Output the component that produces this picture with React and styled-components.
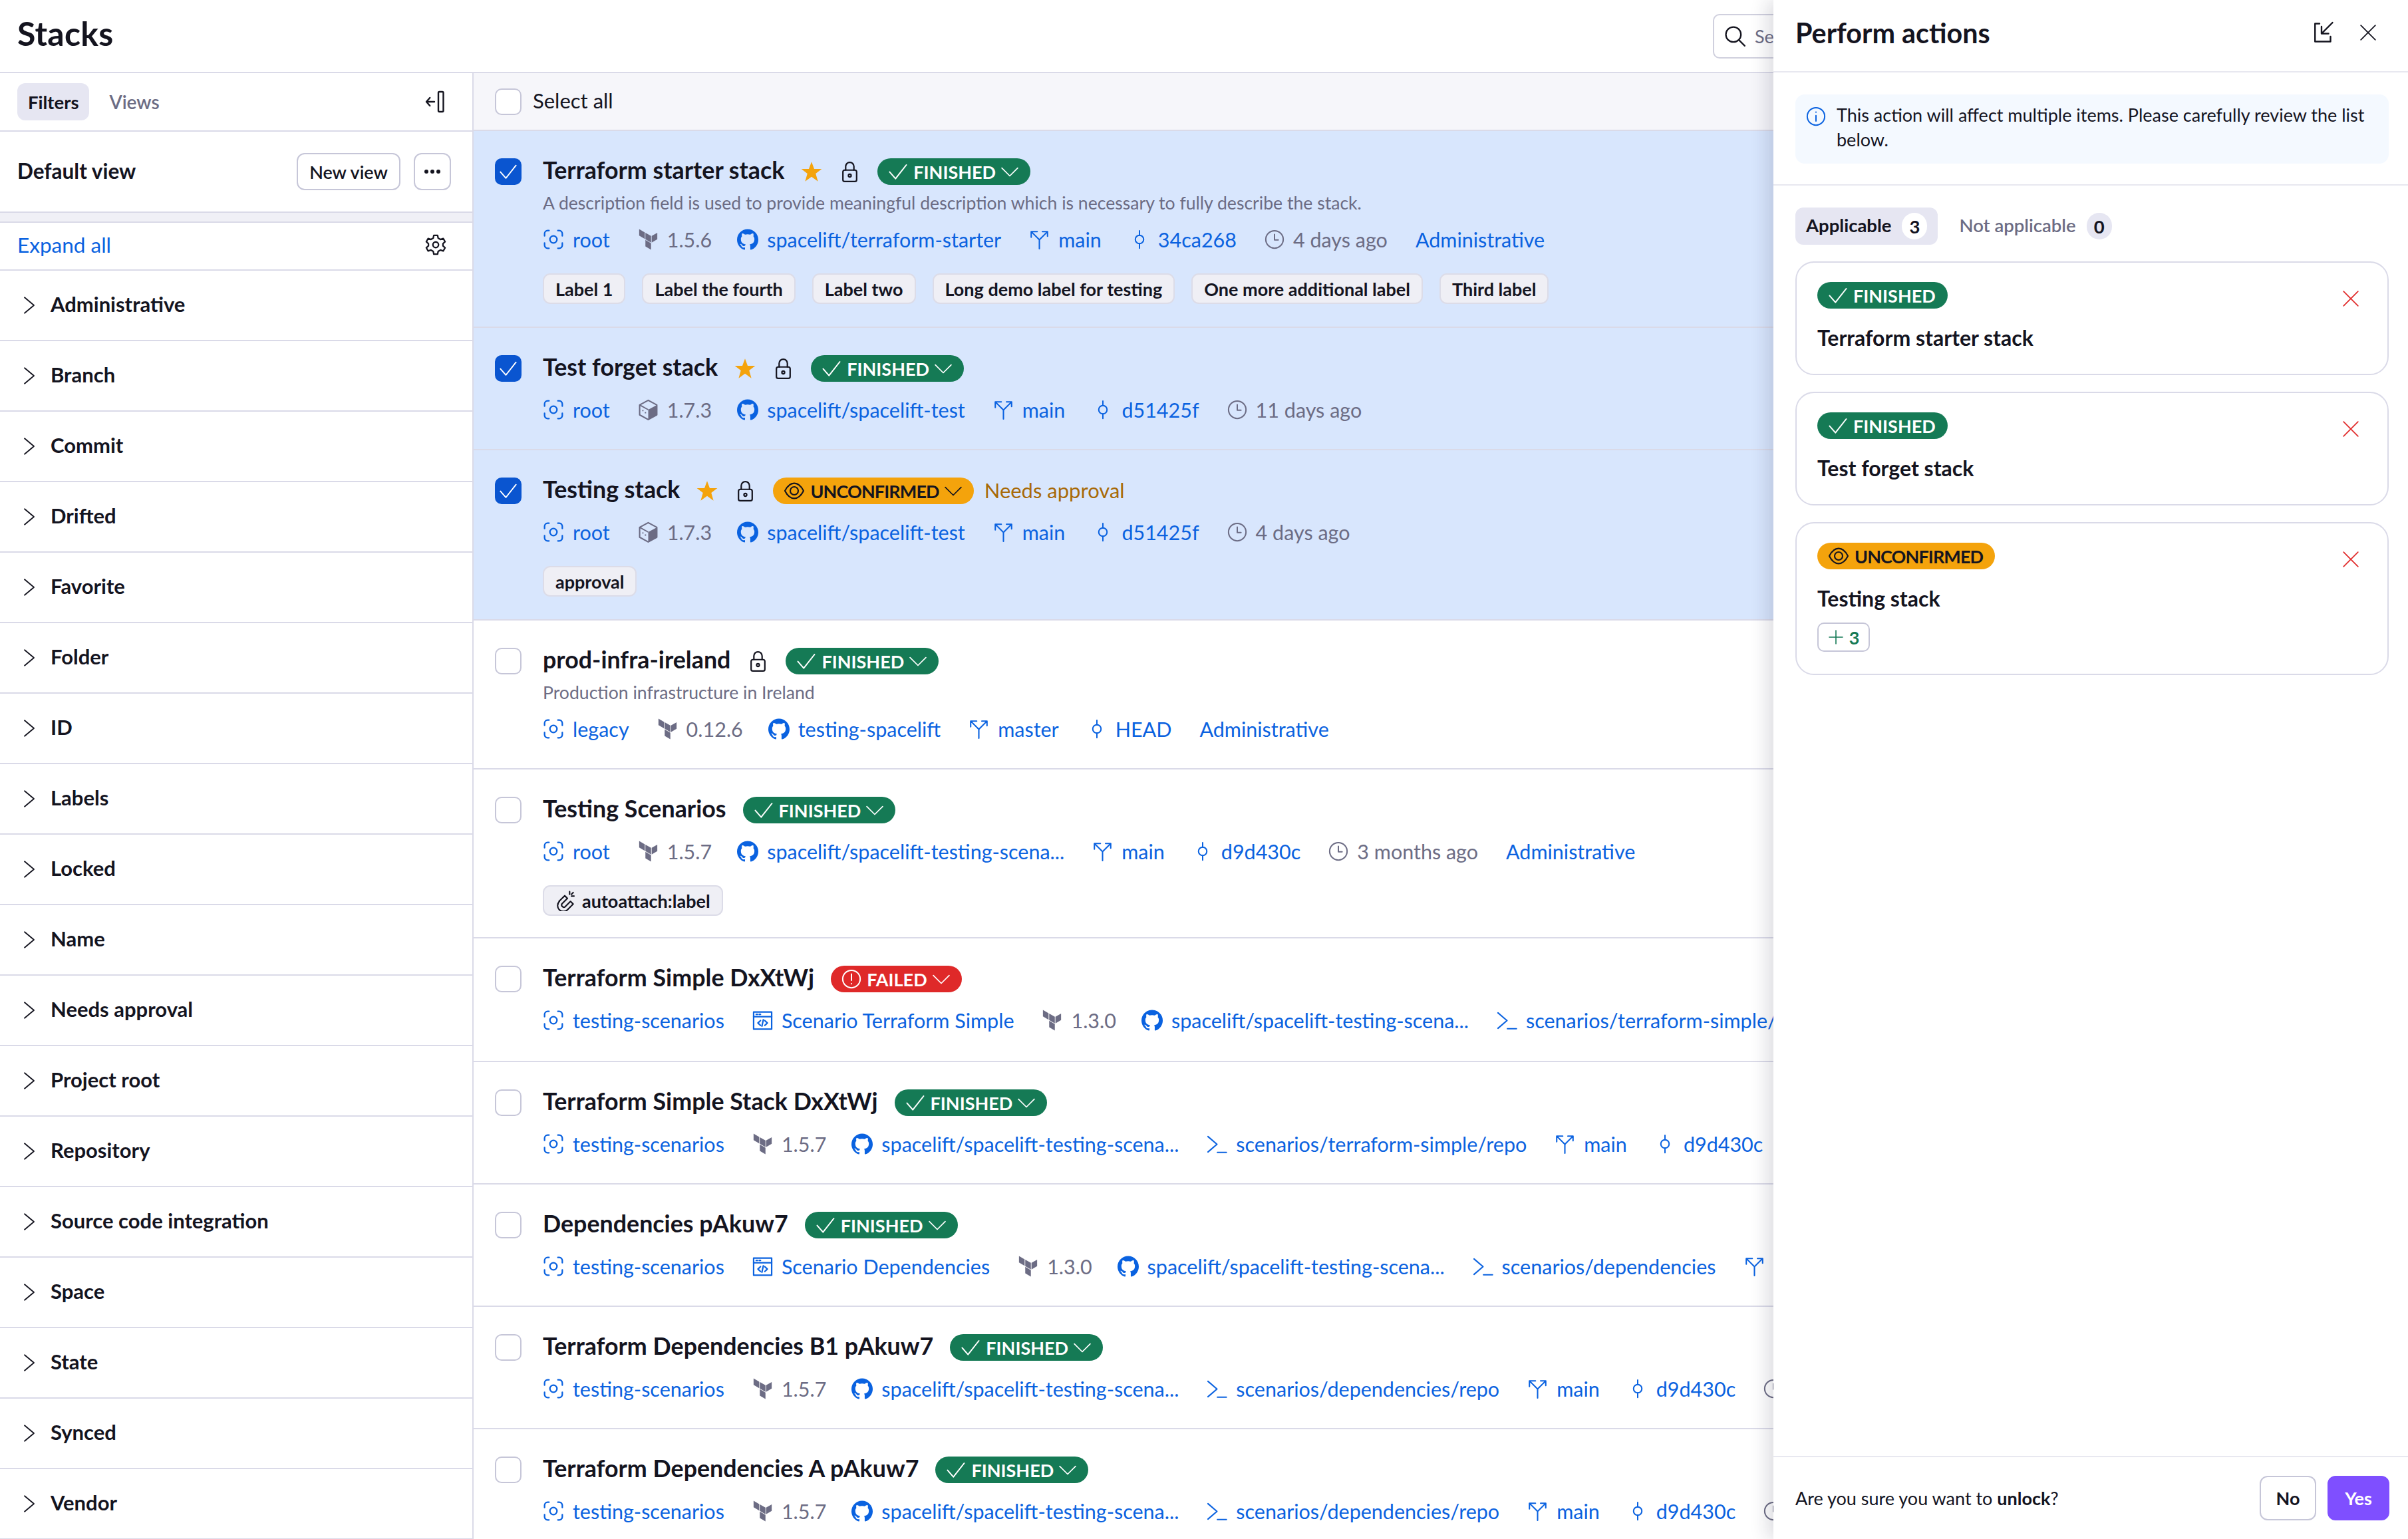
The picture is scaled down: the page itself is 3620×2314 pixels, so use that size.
import React from 'react'
import styled, { createGlobalStyle } from 'styled-components'
import { SiGithub } from 'react-icons/si'

const Global = createGlobalStyle`
  html, body { margin: 0; padding: 0; background: #fff; }
  body { font-family: "Lato", "Noto Sans", sans-serif; color: #14141f; overflow: hidden; }
  * { box-sizing: border-box; }
`

const BLUE = '#0a62e0'
const GRAY = '#6c6c84'
const LINE = '#dadae8'

const Page = styled.div`
  position: relative;
  width: 3620px;
  height: 2314px;
  overflow: hidden;
  background: #fff;
`
const Header = styled.div`
  height: 110px;
  border-bottom: 2px solid ${LINE};
  display: flex;
  align-items: center;
  justify-content: space-between;
  padding: 0 0 0 26px;
`
const Title = styled.h1`
  margin: 0 0 8px;
  font-size: 50px;
  font-weight: 700;
  letter-spacing: 0.2px;
`
const SearchBox = styled.div`
  width: 400px;
  height: 67px;
  margin: 0 645px 0 0;
  border: 2px solid #d0d0de;
  border-radius: 10px;
  display: flex;
  align-items: center;
  gap: 13px;
  padding: 0 14px;
  font-size: 27px;
  color: ${GRAY};
  flex-shrink: 0;
`
const Body = styled.div`
  display: flex;
  height: 2204px;
`
const Sidebar = styled.aside`
  width: 712px;
  flex-shrink: 0;
  border-right: 2px solid ${LINE};
`
const TabsRow = styled.div`
  height: 88px;
  border-bottom: 2px solid ${LINE};
  display: flex;
  align-items: center;
  padding: 0 36px 0 26px;
  gap: 14px;
`
const SideTab = styled.div`
  height: 56px;
  padding: 0 16px;
  border-radius: 12px;
  display: flex;
  align-items: center;
  font-size: ${p => (p.$active ? '27.5px' : '28px')};
  font-weight: ${p => (p.$active ? 700 : 600)};
  color: ${p => (p.$active ? '#14141f' : GRAY)};
  background: ${p => (p.$active ? '#e6e6f2' : 'transparent')};
`
const Spacer = styled.div`
  flex: 1;
`
const ViewRow = styled.div`
  height: 120px;
  display: flex;
  align-items: center;
  padding: 0 32px 0 26px;
  gap: 20px;
  font-size: 31.5px;
  font-weight: 700;
`
const ViewName = styled.span`
  margin-bottom: 3px;
`
const OutlineBtn = styled.button`
  height: 56px;
  padding: 0 ${p => (p.$square ? '0' : '17px')};
  width: ${p => (p.$square ? '56px' : 'auto')};
  background: #fff;
  border: 2px solid #c6c6d8;
  border-radius: 12px;
  font: 600 27px "Lato", sans-serif;
  color: #14141f;
  display: flex;
  align-items: center;
  justify-content: center;
`
const GrayBand = styled.div`
  height: 17px;
  background: #f0f0f6;
  border-top: 2px solid ${LINE};
  border-bottom: 2px solid ${LINE};
`
const ExpandRow = styled.div`
  height: 72px;
  border-bottom: 2px solid ${LINE};
  display: flex;
  align-items: center;
  justify-content: space-between;
  padding: 0 38px 4px 26px;
  font-size: 31.5px;
  color: ${BLUE};
`
const FilterRow = styled.div`
  height: 106px;
  border-bottom: 2px solid ${LINE};
  display: flex;
  align-items: center;
  gap: 18px;
  padding: 0 0 0 30px;
  font-size: 31px;
  font-weight: 700;
`
const FilterName = styled.span`
  margin-bottom: 4px;
`
const List = styled.main`
  flex: 0 0 1954px;
  min-width: 0;
  overflow: hidden;
`
const SelectAll = styled.div`
  height: 87px;
  background: #f6f6fa;
  border-bottom: 2px solid ${LINE};
  display: flex;
  align-items: center;
  gap: 17px;
  padding: 0 0 0 32px;
  font-size: 31px;
`
const SelectText = styled.span`
  margin-bottom: 3px;
`
const Row = styled.div`
  height: ${p => p.$h}px;
  background: ${p => (p.$on ? '#d8e6fd' : '#fff')};
  border-bottom: 2px solid ${LINE};
  display: flex;
  gap: 32px;
  padding: 41px 0 0 32px;
  overflow: hidden;
`
const Check = styled.div`
  width: 40px;
  height: 40px;
  flex-shrink: 0;
  border-radius: 10px;
  background: ${p => (p.$on ? '#0a55d0' : '#fff')};
  border: 2px solid ${p => (p.$on ? '#0a55d0' : '#c6c6d8')};
  display: flex;
  align-items: center;
  justify-content: center;
`
const RowMain = styled.div`
  min-width: 0;
  flex: 1;
`
const NameLine = styled.div`
  display: flex;
  align-items: center;
  height: 40px;
  gap: 25px;
  white-space: nowrap;
`
const Name = styled.div`
  font-size: 35.8px;
  font-weight: 700;
  margin-bottom: 5px;
`
const Badge = styled.div`
  height: 40px;
  border-radius: 20px;
  padding: 0 18px 0 16px;
  display: flex;
  align-items: center;
  gap: 8px;
  flex-shrink: 0;
  font-size: 27px;
  font-weight: 700;
  letter-spacing: ${p => (p.$tight ? '-0.9px' : '0')};
  background: ${p => p.$bg};
  color: ${p => p.$fg};
`
const Needs = styled.span`
  font-size: 31px;
  color: #a86a08;
  margin: 0 0 3px -9px;
`
const Desc = styled.div`
  margin-top: 9px;
  font-size: 26.6px;
  line-height: 36px;
  color: ${GRAY};
  white-space: nowrap;
`
const Meta = styled.div`
  display: flex;
  align-items: center;
  gap: 42px;
  height: 40px;
  margin-top: ${p => p.$mt}px;
  white-space: nowrap;
`
const MetaItem = styled.div`
  display: flex;
  align-items: center;
  gap: 13px;
  flex-shrink: 0;
  font-size: 30.5px;
  color: ${p => (p.$gray ? GRAY : BLUE)};
  margin-right: ${p => (p.$version ? '-4px' : '0')};
`
const Labels = styled.div`
  display: flex;
  gap: 25px;
  margin-top: 31px;
`
const LabelTag = styled.div`
  height: 46px;
  padding: 0 17px;
  background: #efeff5;
  border: 2px solid #dcdce8;
  border-radius: 11px;
  display: flex;
  align-items: center;
  gap: 8px;
  font-size: 27px;
  font-weight: 700;
`
const Panel = styled.section`
  position: absolute;
  top: 0;
  right: 0;
  bottom: 0;
  width: 954px;
  background: #fff;
  box-shadow: -10px 0 24px rgba(30, 30, 60, 0.14);
  display: flex;
  flex-direction: column;
`
const PanelHead = styled.div`
  height: 109px;
  flex-shrink: 0;
  border-bottom: 2px solid #e8e8f0;
  display: flex;
  align-items: center;
  justify-content: space-between;
  padding: 0 47px 10px 33px;
`
const PanelTitle = styled.h2`
  margin: 0;
  font-size: 41.3px;
  font-weight: 700;
`
const HeadIcons = styled.div`
  display: flex;
  gap: 36px;
  align-items: center;
`
const InfoWrap = styled.div`
  padding: 33px 29px 31px 33px;
  border-bottom: 2px solid #e8e8f0;
`
const InfoBox = styled.div`
  height: 104px;
  background: #f4f9ff;
  border-radius: 14px;
  display: flex;
  gap: 16px;
  padding: 13px 16px;
  font-size: 27px;
  line-height: 36.5px;
`
const InfoIconWrap = styled.div`
  flex-shrink: 0;
  padding-top: 5px;
`
const PanelBody = styled.div`
  flex: 1;
  padding: 33px 29px 0 33px;
`
const PanelTabs = styled.div`
  display: flex;
  gap: 32px;
  height: 56px;
  align-items: center;
  margin-bottom: 25px;
`
const PanelTab = styled.div`
  height: 56px;
  display: flex;
  align-items: center;
  gap: 16px;
  padding: 0 ${p => (p.$active ? '16px' : '0')};
  border-radius: 12px;
  font-size: 27.5px;
  font-weight: ${p => (p.$active ? 700 : 600)};
  background: ${p => (p.$active ? '#e6e6f2' : 'transparent')};
  color: ${p => (p.$active ? '#14141f' : GRAY)};
`
const TabLabel = styled.span`
  margin-bottom: 3px;
`
const Count = styled.div`
  width: 38px;
  height: 40px;
  border-radius: 20px;
  display: flex;
  align-items: center;
  justify-content: center;
  font-weight: 700;
  color: #14141f;
  background: ${p => (p.$active ? '#fff' : '#e6e6f2')};
`
const Card = styled.div`
  position: relative;
  height: ${p => p.$h}px;
  margin-bottom: 25px;
  border: 2px solid ${LINE};
  border-radius: 28px;
  padding: 29px 31px;
`
const CardTop = styled.div`
  display: flex;
`
const CardName = styled.div`
  font-size: 32px;
  font-weight: 700;
  margin-top: 24px;
  line-height: 40px;
`
const RemoveBtn = styled.div`
  position: absolute;
  top: 41px;
  right: 42px;
  display: flex;
`
const Plus = styled.div`
  margin-top: 16px;
  width: 79px;
  height: 44px;
  border: 2px solid #c6c6d8;
  border-radius: 10px;
  display: flex;
  align-items: center;
  justify-content: center;
  gap: 8px;
  color: #157a55;
  font-size: 27px;
  font-weight: 700;
`
const Foot = styled.div`
  height: 125px;
  flex-shrink: 0;
  border-top: 2px solid #e8e8f0;
  display: flex;
  align-items: center;
  gap: 17px;
  padding: 0 28px 0 33px;
  font-size: 27px;
`
const FootBtn = styled.button`
  height: 67px;
  width: ${p => (p.$primary ? '93px' : '85px')};
  border-radius: 12px;
  border: 2px solid ${p => (p.$primary ? '#7f4fff' : '#c6c6d8')};
  background: ${p => (p.$primary ? '#7f4fff' : '#fff')};
  color: ${p => (p.$primary ? '#fff' : '#14141f')};
  font: 700 27px "Lato", sans-serif;
`

// thin outline icon, all on a 24 box
const Ico = ({ size = 30, color = 'currentColor', sw = 1.6, children }) => (
  <svg width={size} height={size} viewBox="0 0 24 24" fill="none" stroke={color} strokeWidth={sw} strokeLinecap="round" strokeLinejoin="round" style={{ flexShrink: 0 }}>
    {children}
  </svg>
)
const CheckIco = ({ size = 30, color }) => <Ico size={size} color={color}><path d="M2 12.5l7 8L22 4" /></Ico>
const Chevron = ({ color }) => <Ico size={26} color={color}><path d="M1 7l11 11L23 7" /></Ico>
const Right = () => <Ico size={28} color="#14141f"><path d="M6 2l12 10L6 22" /></Ico>
const Focus = () => (
  <Ico size={32} sw={1.7}><path d="M7 2H5.5A3.5 3.5 0 0 0 2 5.5V8M17 2h1.5A3.5 3.5 0 0 1 22 5.5V8M7 22H5.5A3.5 3.5 0 0 1 2 18.5V16M17 22h1.5a3.5 3.5 0 0 0 3.5-3.5V16" /><circle cx="12" cy="12" r="4" /></Ico>
)
const Terraform = () => (
  <svg width="31" height="32" viewBox="0 0 24 24" fill={GRAY} style={{ flexShrink: 0 }}>
    <path d="M1.44 0v7.575l6.561 3.79V3.787zm21.12 4.227l-6.561 3.791v7.574l6.56-3.787zM8.72 4.23v7.575l6.561 3.787V8.018zm0 8.405v7.575L15.28 24v-7.578z" />
  </svg>
)
const Cube = () => (
  <svg width="31" height="32" viewBox="0 0 24 24" style={{ flexShrink: 0 }}>
    <path d="M12 1l10 5.5V18l-10 5.5L2 18V6.5z" fill="none" stroke={GRAY} strokeWidth="1.6" strokeLinejoin="round" />
    <path d="M12 12l10-5.5V18l-10 5.5z" fill={GRAY} />
    <path d="M2 6.5L12 12M5 13h1.5M8 15.5h1.5" stroke={GRAY} strokeWidth="1.4" />
  </svg>
)
const Branch = () => (
  <Ico size={31}><path d="M12 22.5V12L3 3M12 12l9-9M2.5 9V2.5h7M21.5 8V2.5h-6" /></Ico>
)
const Commit = () => (
  <Ico><circle cx="12" cy="12" r="5" /><path d="M12 1.5V7M12 17v5.5" /></Ico>
)
const Clock = () => (
  <Ico color={GRAY}><circle cx="12" cy="12" r="10.5" /><path d="M12 6v6.5h4.5" /></Ico>
)
const CodeBrowser = () => (
  <Ico size={31} sw={1.7}><rect x="1.5" y="2" width="21" height="20" /><path d="M1.5 7.5h21M4.5 4.8H6M8 4.8h1.5M9.5 12l-3 2.8 3 2.8M14.5 12l3 2.8-3 2.8M12.8 11l-1.6 7.5" /></Ico>
)
const Terminal = () => (
  <Ico size={31}><path d="M1.5 3L12 12 1.5 21M12.5 21.5H23" /></Ico>
)
const Lock = () => (
  <Ico size={33} color="#14141f"><rect x="4.5" y="10" width="15" height="12.5" rx="2" /><path d="M7.5 10V6a4.5 4.5 0 0 1 9 0v4" /><circle cx="12" cy="16" r="1.5" /></Ico>
)
const Star = () => (
  <svg width="32" height="32" viewBox="0 0 24 24" fill="#f4a30c" style={{ flexShrink: 0 }}>
    <path d="M12 1l3 8h8.5l-6.8 5.2 2.5 8.800-7.200-5.200-7.200 5.200 2.500-8.800L0.5 9H9z" />
  </svg>
)
const Eye = () => (
  <Ico size={32} color="#14141f"><path d="M1.5 12C4 7 8 3.5 12 3.5S20 7 22.5 12C20 17 16 20.5 12 20.5S4 17 1.5 12z" /><circle cx="12" cy="12" r="4.5" /></Ico>
)
const Alert = () => (
  <Ico size={30} color="#fff"><circle cx="12" cy="12" r="10.5" /><path d="M12 6v7.5M12 17.5v.2" /></Ico>
)
const XIco = ({ size = 26, color = '#14141f' }) => <Ico size={size} color={color}><path d="M2 2l20 20M22 2L2 22" /></Ico>
const Magnet = () => (
  <Ico size={32} color="#14141f"><path d="M4 13l6.5-6.5 3 3-6 6a2.5 2.5 0 0 0 3.5 3.5l6-6 3 3-6.5 6.5a6.500 6.500 0 0 1-9-9.500z" /><path d="M16 2v3M21 7h-3M20 3l-2 2" /></Ico>
)
const Dots = () => (
  <svg width="26" height="8" viewBox="0 0 26 8" fill="#14141f">
    <circle cx="4" cy="4" r="3" /><circle cx="13" cy="4" r="3" /><circle cx="22" cy="4" r="3" />
  </svg>
)

const StatusBadge = ({ kind = 'finished', chev = true }) => {
  if (kind === 'unconfirmed') {
    return <Badge $bg="#f4a30c" $fg="#14141f" $tight><Eye />UNCONFIRMED{chev && <Chevron color="#14141f" />}</Badge>
  }
  if (kind === 'failed') {
    return <Badge $bg="#df2929" $fg="#fff"><Alert />FAILED{chev && <Chevron color="#fff" />}</Badge>
  }
  return <Badge $bg="#157a55" $fg="#fff"><CheckIco color="#fff" />FINISHED{chev && <Chevron color="#fff" />}</Badge>
}

const iconFor = {
  space: <Focus />,
  tf: <Terraform />,
  cube: <Cube />,
  gh: <SiGithub size={32} style={{ flexShrink: 0 }} />,
  branch: <Branch />,
  commit: <Commit />,
  clock: <Clock />,
  code: <CodeBrowser />,
  path: <Terminal />,
}

const LONG = 'spacelift/spacelift-testing-scena...'

const rows = [
  {
    name: 'Terraform starter stack', on: true, star: true, lock: true, h: 296,
    desc: 'A description field is used to provide meaningful description which is necessary to fully describe the stack.',
    meta: [['space', 'root'], ['tf', '1.5.6', 1], ['gh', 'spacelift/terraform-starter'], ['branch', 'main'], ['commit', '34ca268'], ['clock', '4 days ago', 1], [null, 'Administrative']],
    labels: ['Label 1', 'Label the fourth', 'Label two', 'Long demo label for testing', 'One more additional label', 'Third label'],
  },
  {
    name: 'Test forget stack', on: true, star: true, lock: true, h: 184,
    meta: [['space', 'root'], ['cube', '1.7.3', 1], ['gh', 'spacelift/spacelift-test'], ['branch', 'main'], ['commit', 'd51425f'], ['clock', '11 days ago', 1]],
  },
  {
    name: 'Testing stack', on: true, star: true, lock: true, kind: 'unconfirmed', needs: true, h: 256,
    meta: [['space', 'root'], ['cube', '1.7.3', 1], ['gh', 'spacelift/spacelift-test'], ['branch', 'main'], ['commit', 'd51425f'], ['clock', '4 days ago', 1]],
    labels: ['approval'],
  },
  {
    name: 'prod-infra-ireland', lock: true, h: 224,
    desc: 'Production infrastructure in Ireland',
    meta: [['space', 'legacy'], ['tf', '0.12.6', 1], ['gh', 'testing-spacelift'], ['branch', 'master'], ['commit', 'HEAD'], [null, 'Administrative']],
  },
  {
    name: 'Testing Scenarios', h: 254,
    meta: [['space', 'root'], ['tf', '1.5.7', 1], ['gh', LONG], ['branch', 'main'], ['commit', 'd9d430c'], ['clock', '3 months ago', 1], [null, 'Administrative']],
    labels: ['autoattach:label'], magnet: true,
  },
  {
    name: 'Terraform Simple DxXtWj', kind: 'failed', h: 186,
    meta: [['space', 'testing-scenarios'], ['code', 'Scenario Terraform Simple'], ['tf', '1.3.0', 1], ['gh', LONG], ['path', 'scenarios/terraform-simple/repo']],
  },
  {
    name: 'Terraform Simple Stack DxXtWj', h: 184,
    meta: [['space', 'testing-scenarios'], ['tf', '1.5.7', 1], ['gh', LONG], ['path', 'scenarios/terraform-simple/repo'], ['branch', 'main'], ['commit', 'd9d430c']],
  },
  {
    name: 'Dependencies pAkuw7', h: 184,
    meta: [['space', 'testing-scenarios'], ['code', 'Scenario Dependencies'], ['tf', '1.3.0', 1], ['gh', LONG], ['path', 'scenarios/dependencies'], ['branch', '']],
  },
  {
    name: 'Terraform Dependencies B1 pAkuw7', h: 184,
    meta: [['space', 'testing-scenarios'], ['tf', '1.5.7', 1], ['gh', LONG], ['path', 'scenarios/dependencies/repo'], ['branch', 'main'], ['commit', 'd9d430c'], ['clock', '', 1]],
  },
  {
    name: 'Terraform Dependencies A pAkuw7', h: 184,
    meta: [['space', 'testing-scenarios'], ['tf', '1.5.7', 1], ['gh', LONG], ['path', 'scenarios/dependencies/repo'], ['branch', 'main'], ['commit', 'd9d430c'], ['clock', '', 1]],
  },
]

const filters = ['Administrative', 'Branch', 'Commit', 'Drifted', 'Favorite', 'Folder', 'ID', 'Labels', 'Locked', 'Name', 'Needs approval', 'Project root', 'Repository', 'Source code integration', 'Space', 'State', 'Synced', 'Vendor']

const StackRow = ({ row }) => (
  <Row $on={row.on} $h={row.h}>
    <Check $on={row.on}>{row.on && <CheckIco size={28} color="#fff" />}</Check>
    <RowMain>
      <NameLine>
        <Name>{row.name}</Name>
        {row.star && <Star />}
        {row.lock && <Lock />}
        <StatusBadge kind={row.kind} />
        {row.needs && <Needs>Needs approval</Needs>}
      </NameLine>
      {row.desc && <Desc>{row.desc}</Desc>}
      <Meta $mt={row.desc ? 17 : 22}>
        {row.meta.map(([icon, text, gray]) => (
          <MetaItem key={text + icon} $gray={gray} $version={icon === 'tf' || icon === 'cube'}>
            {icon && iconFor[icon]}
            {text}
          </MetaItem>
        ))}
      </Meta>
      {row.labels && (
        <Labels>
          {row.labels.map(l => (
            <LabelTag key={l}>{row.magnet && <Magnet />}{l}</LabelTag>
          ))}
        </Labels>
      )}
    </RowMain>
  </Row>
)

const App = () => (
  <Page>
    <Global />
    <Header>
      <Title>Stacks</Title>
      <SearchBox>
        <Ico size={34} color="#14141f"><circle cx="10.5" cy="10.5" r="8" /><path d="M16.5 16.5l6 6" /></Ico>
        Se
      </SearchBox>
    </Header>
    <Body>
      <Sidebar>
        <TabsRow>
          <SideTab $active>Filters</SideTab>
          <SideTab>Views</SideTab>
          <Spacer />
          <Ico size={36} color="#14141f"><path d="M10 12H2M5.5 8L2 12l3.5 4" /><rect x="14" y="2" width="5" height="20" rx="1" /></Ico>
        </TabsRow>
        <ViewRow>
          <ViewName>Default view</ViewName>
          <Spacer />
          <OutlineBtn>New view</OutlineBtn>
          <OutlineBtn $square><Dots /></OutlineBtn>
        </ViewRow>
        <GrayBand />
        <ExpandRow>
          Expand all
          <Ico size={34} color="#14141f">
            <circle cx="12" cy="12" r="3" />
            <path d="M10 2h4l.6 3 2.4 1.4 3-1 2 3.4-2.3 2v2.4l2.3 2-2 3.4-3-1-2.4 1.4-.6 3h-4l-.6-3-2.4-1.400-3 1-2-3.400 2.300-2v-2.400l-2.300-2 2-3.400 3 1L9.400 5z" />
          </Ico>
        </ExpandRow>
        {filters.map(f => (
          <FilterRow key={f}><Right /><FilterName>{f}</FilterName></FilterRow>
        ))}
      </Sidebar>
      <List>
        <SelectAll><Check /><SelectText>Select all</SelectText></SelectAll>
        {rows.map(r => <StackRow key={r.name} row={r} />)}
      </List>
    </Body>
    <Panel>
      <PanelHead>
        <PanelTitle>Perform actions</PanelTitle>
        <HeadIcons>
          <Ico size={36} color="#14141f"><path d="M8 3H3.5v18H19v-5M21 2L10 13M10 6v7h7" /></Ico>
          <XIco />
        </HeadIcons>
      </PanelHead>
      <InfoWrap>
        <InfoBox>
          <InfoIconWrap>
            <Ico size={30} color={BLUE}><circle cx="12" cy="12" r="10.5" /><path d="M12 11v6.5M12 6.8v.2" /></Ico>
          </InfoIconWrap>
          <span>This action will affect multiple items. Please carefully review the list below.</span>
        </InfoBox>
      </InfoWrap>
      <PanelBody>
        <PanelTabs>
          <PanelTab $active><TabLabel>Applicable</TabLabel><Count $active>3</Count></PanelTab>
          <PanelTab><TabLabel>Not applicable</TabLabel><Count>0</Count></PanelTab>
        </PanelTabs>
        <Card $h={171}>
          <CardTop><StatusBadge chev={false} /></CardTop>
          <CardName>Terraform starter stack</CardName>
          <RemoveBtn><XIco color="#e12a2a" /></RemoveBtn>
        </Card>
        <Card $h={171}>
          <CardTop><StatusBadge chev={false} /></CardTop>
          <CardName>Test forget stack</CardName>
          <RemoveBtn><XIco color="#e12a2a" /></RemoveBtn>
        </Card>
        <Card $h={230}>
          <CardTop><StatusBadge kind="unconfirmed" chev={false} /></CardTop>
          <CardName>Testing stack</CardName>
          <Plus><Ico size={24} color="#157a55"><path d="M12 2v20M2 12h20" /></Ico>3</Plus>
          <RemoveBtn><XIco color="#e12a2a" /></RemoveBtn>
        </Card>
      </PanelBody>
      <Foot>
        <span>Are you sure you want to <b>unlock</b>?</span>
        <Spacer />
        <FootBtn>No</FootBtn>
        <FootBtn $primary>Yes</FootBtn>
      </Foot>
    </Panel>
  </Page>
)

export default App
